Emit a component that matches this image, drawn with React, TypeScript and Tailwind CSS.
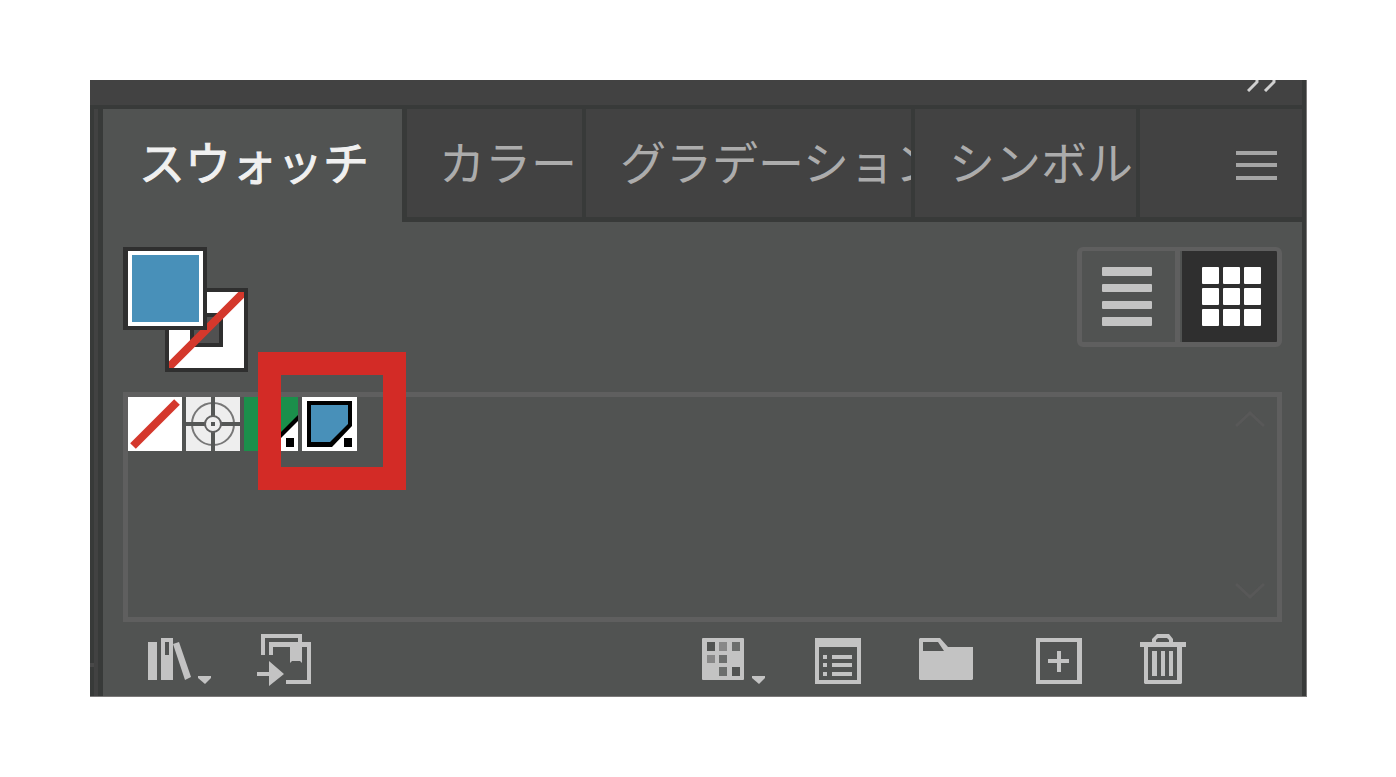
import React, { useState } from 'react';

interface Tab {
  id: string;
  label: string;
  width: string;
}

const TABS: Tab[] = [
  { id: 'swatches', label: 'スウォッチ', width: 'pl-9 pr-[33px]' },
  { id: 'color', label: 'カラー', width: 'border-l-[5px] pl-8 pr-[5px]' },
  { id: 'gradient', label: 'グラデーション', width: 'w-[329px] pl-[34px]' },
  { id: 'symbols', label: 'シンボル', width: 'pl-[34px] pr-[3px]' },
];

const TabBar: React.FC = () => {
  const [active, setActive] = useState('swatches');

  return (
    <div role="tablist" className="flex h-[113px] bg-[#424242]">
      {TABS.map((tab) => (
        <button
          key={tab.id}
          role="tab"
          aria-selected={active === tab.id}
          onClick={() => setActive(tab.id)}
          className={`shrink-0 overflow-hidden whitespace-nowrap text-left text-[46px] leading-[60px] border-[#383a39] ${tab.width} ${
            active === tab.id
              ? 'bg-[#515352] pb-[11px] text-[#f0f0f0] [-webkit-text-stroke:1px_#f0f0f0]'
              : 'border-b-[5px] border-r-4 pb-1.5 text-[#acacac]'
          }`}
        >
          {tab.label}
        </button>
      ))}
      <div className="flex flex-1 items-center justify-end border-b-[5px] border-[#383a39] pr-[25px] pt-1">
        <button aria-label="パネルメニュー">
          <svg width="41" height="29" viewBox="0 0 41 29" fill="#a5a5a5" shapeRendering="crispEdges" className="block">
            <rect y="0" width="41" height="4" />
            <rect y="12" width="41" height="4" />
            <rect y="25" width="41" height="4" />
          </svg>
        </button>
      </div>
    </div>
  );
};

const FillStroke: React.FC = () => (
  <div className="relative h-[125px] w-[125px]">
    <button aria-label="線" className="absolute bottom-0 right-0 border-4 border-[#2f2f2f] bg-white">
      <svg width="75" height="76" viewBox="0 0 75 76" className="block">
        <rect x="23" y="23" width="29" height="30" fill="#515151" stroke="#2f2f2f" strokeWidth="4" />
        <path d="M-3 78L78 -3" stroke="#d4382c" strokeWidth="8" />
      </svg>
    </button>
    <button aria-label="塗り" className="absolute left-0 top-0 h-[83px] w-[84px] border-4 border-l-[5px] border-[#2f2f2f] bg-white p-1">
      <span className="block h-full w-full bg-[#4890b9]" />
    </button>
  </div>
);

const ViewToggle: React.FC = () => (
  <div className="flex h-[100px] w-[205px] overflow-hidden rounded-md border-4 border-x-[5px] border-b-[5px] border-[#5f5f5f]">
    <button aria-label="リスト表示" className="flex flex-1 items-center justify-center pr-[3px]">
      <svg width="50" height="59" viewBox="0 0 50 59" fill="#c3c3c3">
        <rect y="0" width="50" height="9" rx="1" />
        <rect y="17" width="50" height="8" rx="1" />
        <rect y="34" width="50" height="8" rx="1" />
        <rect y="50" width="50" height="9" rx="1" />
      </svg>
    </button>
    <span className="w-[5px] bg-[#5f5f5f]" />
    <button aria-label="サムネール表示" className="ml-0.5 flex w-[95px] items-center justify-center bg-[#2f2f2f] pl-1">
      <svg width="59" height="59" viewBox="0 0 59 59" fill="#ffffff">
        {[0, 21, 42].map((y) => [0, 21, 42].map((x) => <rect key={`${x}-${y}`} x={x} y={y} width="17" height="17" rx="1" />))}
      </svg>
    </button>
  </div>
);

const SwatchList: React.FC = () => (
  <div className="mt-5 flex h-[230px] justify-between border-[5px] border-[#5f5f5f]">
    <div className="flex gap-1 items-start">
      <button aria-label="なし">
        <svg width="54" height="54" viewBox="0 0 54 54" className="block">
          <rect width="54" height="54" fill="#ffffff" />
          <path d="M5 49L49 5" stroke="#d4382c" strokeWidth="8" />
        </svg>
      </button>
      <button aria-label="レジストレーション">
        <svg width="54" height="54" viewBox="0 0 54 54" className="block">
          <rect width="54" height="54" fill="#eeeeee" />
          <circle cx="27" cy="27" r="21" fill="none" stroke="#777777" strokeWidth="2" />
          <path d="M27 0V54M0 27H54" stroke="#555756" strokeWidth="4" />
          <circle cx="27" cy="27" r="8" fill="#eeeeee" stroke="#616161" strokeWidth="2" />
          <rect x="25" y="25" width="4" height="4" fill="#555756" />
        </svg>
      </button>
      <button aria-label="グリーン">
        <svg width="54" height="54" viewBox="0 0 54 54" className="block">
          <rect width="54" height="54" fill="#1b8f4b" />
          <path d="M54 18V54H18Z" fill="#000000" />
          <path d="M54 24V54H24Z" fill="#ffffff" />
          <rect x="42" y="41" width="8" height="9" fill="#000000" />
        </svg>
      </button>
      <div className="relative">
        <button aria-label="ブルー" className="block">
          <svg width="55" height="54" viewBox="0 0 55 54" className="block">
            <rect width="55" height="54" fill="#ffffff" />
            <path d="M5 4H50V29L30 50H5Z" fill="#000000" />
            <path d="M9 8H46V27L28 45H9Z" fill="#4890b9" />
            <rect x="42" y="41" width="8" height="9" fill="#000000" />
          </svg>
        </button>
        {/* highlight frame over the new swatch */}
        <div className="pointer-events-none absolute -left-11 -top-[45px] h-[138px] w-[148px] border-[23px] border-[#d32b26]" />
      </div>
    </div>
    <div className="flex flex-col justify-between pb-4 pt-3 pr-3">
      <button aria-label="上へスクロール">
        <svg width="30" height="20" viewBox="0 0 30 20" fill="none" stroke="#585858" strokeWidth="3">
          <path d="M1 17L15 4L29 17" />
        </svg>
      </button>
      <button aria-label="下へスクロール">
        <svg width="30" height="20" viewBox="0 0 30 20" fill="none" stroke="#585858" strokeWidth="3">
          <path d="M1 3L15 16L29 3" />
        </svg>
      </button>
    </div>
  </div>
);

const Toolbar: React.FC = () => (
  <div className="flex h-[74px] items-start justify-between pl-[25px] pr-24 pt-3">
    <div className="flex gap-[46px]">
      <button aria-label="スウォッチライブラリメニュー">
        <svg width="63" height="52" viewBox="0 0 63 52" fill="#c3c3c3" className="block">
          <rect x="0" y="8" width="9" height="38" />
          <path fillRule="evenodd" d="M13 4H25V46H13ZM17 8V21H21V8Z" />
          <path d="M25 10L31 8L43 43L37 46Z" />
          <path d="M50 42H63V44L57 50L50 44Z" />
        </svg>
      </button>
      <button aria-label="ライブラリに追加">
        <svg width="54" height="52" viewBox="0 0 54 52" fill="#c3c3c3" className="block">
          <path d="M4 21V0H45V8H54V50H29V46H50V13H45V29L43 27H35L33 29V13H16V21H12V8H41V4H8V21Z" />
          <path d="M0 38H12V27L27 40L12 52V42H0Z" />
        </svg>
      </button>
    </div>
    <div className="flex gap-[50px]">
      <button aria-label="スウォッチの種類メニュー">
        <svg width="63" height="52" viewBox="0 0 63 52" className="block">
          <rect y="4" width="42" height="42" rx="1" fill="#c3c3c3" />
          <g fill="#515352">
            <rect x="5" y="8" width="8" height="9" />
            <rect x="30" y="33" width="8" height="9" />
          </g>
          <g fill="#6c6e6d">
            <rect x="30" y="8" width="8" height="9" />
            <rect x="17" y="21" width="8" height="8" />
            <rect x="17" y="33" width="8" height="9" />
          </g>
          <g fill="#888888">
            <rect x="17" y="8" width="8" height="9" />
            <rect x="5" y="21" width="8" height="8" />
          </g>
          <path d="M50 42H63V44L57 50L50 44Z" fill="#c3c3c3" />
        </svg>
      </button>
      <button aria-label="スウォッチオプション">
        <svg width="54" height="52" viewBox="0 0 54 52" fill="#c3c3c3" className="block">
          <path fillRule="evenodd" d="M0 4H46V50H0ZM4 13V46H42V13Z" />
          {[21, 29, 38].map((y) => (
            <g key={y}>
              <rect x="8" y={y} width="4" height="4" />
              <rect x="17" y={y} width="20" height="4" />
            </g>
          ))}
        </svg>
      </button>
      <button aria-label="新規カラーグループ">
        <svg width="59" height="52" viewBox="0 0 59 52" fill="#c3c3c3" className="block">
          <path fillRule="evenodd" d="M1 4H21L29 13H54V45L53 46H1L0 45V5ZM4 8V17H25L19 8Z" />
        </svg>
      </button>
      <button aria-label="新規スウォッチ">
        <svg width="62" height="52" viewBox="0 0 62 52" fill="#c3c3c3" className="block">
          <path fillRule="evenodd" d="M8 4H54V50H8ZM12 8V46H49V8Z" />
          <path d="M29 17H33V25H41V29H33V38H29V29H20V25H29Z" />
        </svg>
      </button>
      <button aria-label="スウォッチを削除">
        <svg width="46" height="52" viewBox="0 0 46 52" fill="#c3c3c3" className="block">
          <path fillRule="evenodd" d="M0 8H12V5L17 0H29L33 5V8H46V13H42V49L41 50H5L4 49V13H0ZM16 8H29V6L27 4H18L16 6ZM8 13V46H37V13Z" />
          <rect x="12" y="17" width="5" height="25" />
          <rect x="21" y="17" width="4" height="25" />
          <rect x="29" y="17" width="4" height="25" />
        </svg>
      </button>
    </div>
  </div>
);

export default function App() {
  return (
    <main lang="ja" className="min-h-screen bg-white py-20 pl-[90px] pr-[89px] font-['Noto_Sans_CJK_JP','Noto_Sans',sans-serif]">
      <div className="border-b border-r border-[#7b7979] bg-[#424242]">
        <div className="flex h-[25px] items-start justify-end border-r-4 border-[#383a39] pr-[26px]">
          <button aria-label="パネルを折りたたむ">
            <svg width="29" height="12" viewBox="0 0 29 12" fill="none" stroke="#d0d0d0" strokeWidth="3" className="block">
              <path d="M10 -2V2L1 11M27 -2V2L18 11" />
            </svg>
          </button>
        </div>
        <div className="flex border-t-4 border-[#383a39]">
          {/* neighbouring dock edge */}
          <div className="flex w-2 shrink-0 items-end border-r-4 border-[#424242] bg-[#383a39] pb-[29px]">
            <span className="h-1 w-1 bg-[#484848]" />
          </div>
          <div className="min-w-0 flex-1 border-l-[5px] border-r-4 border-[#383a39] bg-[#515352]">
            <TabBar />
            <div className="px-5 pt-[25px]">
              <div className="flex items-start justify-between">
                <FillStroke />
                <ViewToggle />
              </div>
              <SwatchList />
              <Toolbar />
            </div>
          </div>
        </div>
      </div>
    </main>
  );
}
